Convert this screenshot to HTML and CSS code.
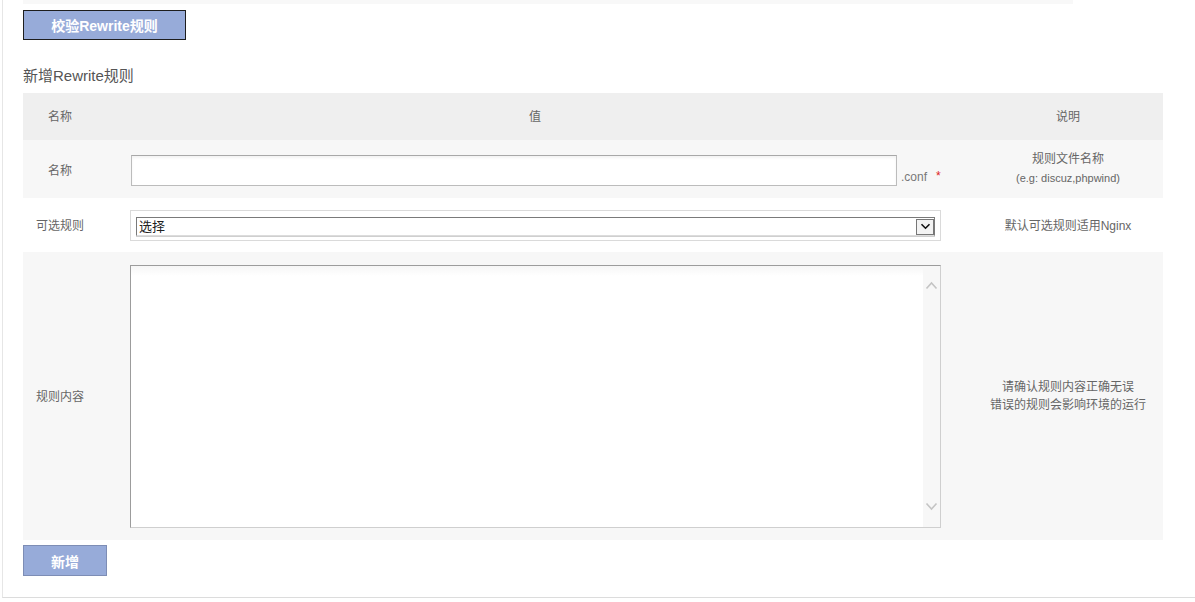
FILE: index.html
```html
<!DOCTYPE html>
<html>
<head>
<meta charset="utf-8">
<link rel="stylesheet" href="styles.css">
</head>
<body>
<div class="page">
  <div class="topbar"></div>
  <div class="btn-row"><button class="btn btn-check">校验Rewrite规则</button></div>
  <h3 class="title">新增Rewrite规则</h3>
  <div class="grid">
    <div class="cell head">名称</div>
    <div class="cell head">值</div>
    <div class="cell head">说明</div>

    <div class="cell alt lbl lbl-2">名称</div>
    <div class="cell alt val">
      <div class="name-field"><input class="txt" type="text"><span class="conf">.conf</span><span class="req">*</span></div>
    </div>
    <div class="cell alt desc"><div>规则文件名称</div><div class="small">(e.g: discuz,phpwind)</div></div>

    <div class="cell lbl">可选规则</div>
    <div class="cell val">
      <div class="sel-wrap">
        <div class="sel"><span class="sel-text">选择</span><span class="sel-btn"><svg width="11" height="7" viewBox="0 0 11 7"><path d="M1.5 1.2 L5.5 5.2 L9.5 1.2" fill="none" stroke="#111" stroke-width="1.6"/></svg></span></div>
      </div>
    </div>
    <div class="cell desc lbl">默认可选规则适用Nginx</div>

    <div class="cell alt lbl">规则内容</div>
    <div class="cell alt val">
      <div class="area-wrap">
        <textarea class="area"></textarea>
        <div class="scroll">
          <svg width="13" height="9" viewBox="0 0 13 9"><path d="M1.5 7.5 L6.5 2 L11.5 7.5" fill="none" stroke="#c4c4c4" stroke-width="1.6"/></svg>
          <svg width="13" height="9" viewBox="0 0 13 9"><path d="M1.5 1.5 L6.5 7 L11.5 1.5" fill="none" stroke="#c4c4c4" stroke-width="1.6"/></svg>
        </div>
      </div>
    </div>
    <div class="cell alt desc"><div>请确认规则内容正确无误</div><div>错误的规则会影响环境的运行</div></div>
  </div>
  <div class="btn-row2"><button class="btn btn-add">新增</button></div>
</div>
</body>
</html>
```
FILE: styles.css
```css
html, body { margin: 0; padding: 0; background: #fff; }
body { font-family: "Liberation Sans", Arial, "Noto Sans CJK SC", sans-serif; color: #666; font-size: 12px; }
.page {
  margin-left: 2px;
  height: 597px;
  border-left: 1px solid #e6e6e6;
  border-bottom: 1px solid #dcdcdc;
  padding-left: 20px;
}
.topbar { width: 1050px; height: 4px; background: #f8f8f8; }
.btn-row { padding-top: 6px; }
.btn {
  display: block;
  font-family: "Liberation Sans", Arial, "Noto Sans CJK SC", sans-serif;
  background: #97abd9;
  color: #fff;
  font-weight: bold;
  font-size: 14px;
  padding: 0;
  cursor: pointer;
}
.btn-check { width: 163px; height: 30px; border: 1px solid #1e1e1e; }
.title { margin: 0; padding-top: 27px; height: 26px; font-size: 15px; font-weight: normal; color: #555; line-height: 18px; }
.grid {
  display: grid;
  width: 1140px;
  grid-template-columns: 74px 876px 190px;
  grid-template-rows: 47px 58px 54px 288px;
}
.cell {
  display: flex; flex-direction: column; justify-content: center; align-items: center;
  text-align: center; color: #666; line-height: 18px;
}
.lbl { padding-top: 2px; }
.lbl-2 { padding-top: 4px; }
.head { background: #efefef; }
.alt { background: #f7f7f7; }
.val { align-items: flex-start; padding-left: 33px; }
.name-field { display: flex; align-items: flex-end; padding-top: 2px; }
.txt {
  width: 766px; height: 31px; box-sizing: border-box; margin: 0 0 0 1px;
  border: 1px solid #bcbcbc; border-top-color: #a8a8a8;
  box-shadow: inset 0 2px 3px rgba(0,0,0,0.05);
  background: #fff;
}
.conf { color: #777; margin-left: 4px; line-height: 14px; margin-bottom: 2px; }
.req { color: #d22; margin-left: 9px; line-height: 14px; margin-bottom: 3px; }
.desc .small { font-size: 11px; line-height: 20px; }
.sel-wrap {
  width: 811px; height: 31px; box-sizing: border-box;
  border: 1px solid #dadada; background: #fff;
  padding: 6px 5px 0 5px; margin-top: 1px;
}
.sel {
  height: 19px; box-sizing: border-box; border: 1px solid #7a7a7a;
  display: flex; align-items: center; justify-content: space-between;
  background: #fff; border-bottom-color: #dcdcdc;
  box-shadow: 0 1px 0 #cfcfcf;
}
.sel-text { color: #222; font-size: 13px; padding-left: 2px; line-height: 16px; }
.sel-btn {
  width: 18px; height: 16px; box-sizing: border-box; border: 1px solid #777;
  background: #f3f3f3; display: flex; align-items: center; justify-content: center;
}
.area-wrap {
  width: 811px; height: 263px; box-sizing: border-box; display: flex;
  border: 1px solid #cfcfcf; border-top-color: #9c9c9c; border-left-color: #9c9c9c;
  background: #fff;
}
.area {
  flex: 1; border: none; resize: none; margin: 0; padding: 0; outline: none;
  background: linear-gradient(#f6f6f6, #fff 10px);
}
.scroll {
  width: 17px; background: #f7f7f7; display: flex; flex-direction: column;
  justify-content: space-between; align-items: center; padding: 15px 0 16px;
}
.btn-row2 { padding-top: 5px; }
.btn-add { width: 84px; height: 31px; border: 1px solid #7d8db5; }
```
